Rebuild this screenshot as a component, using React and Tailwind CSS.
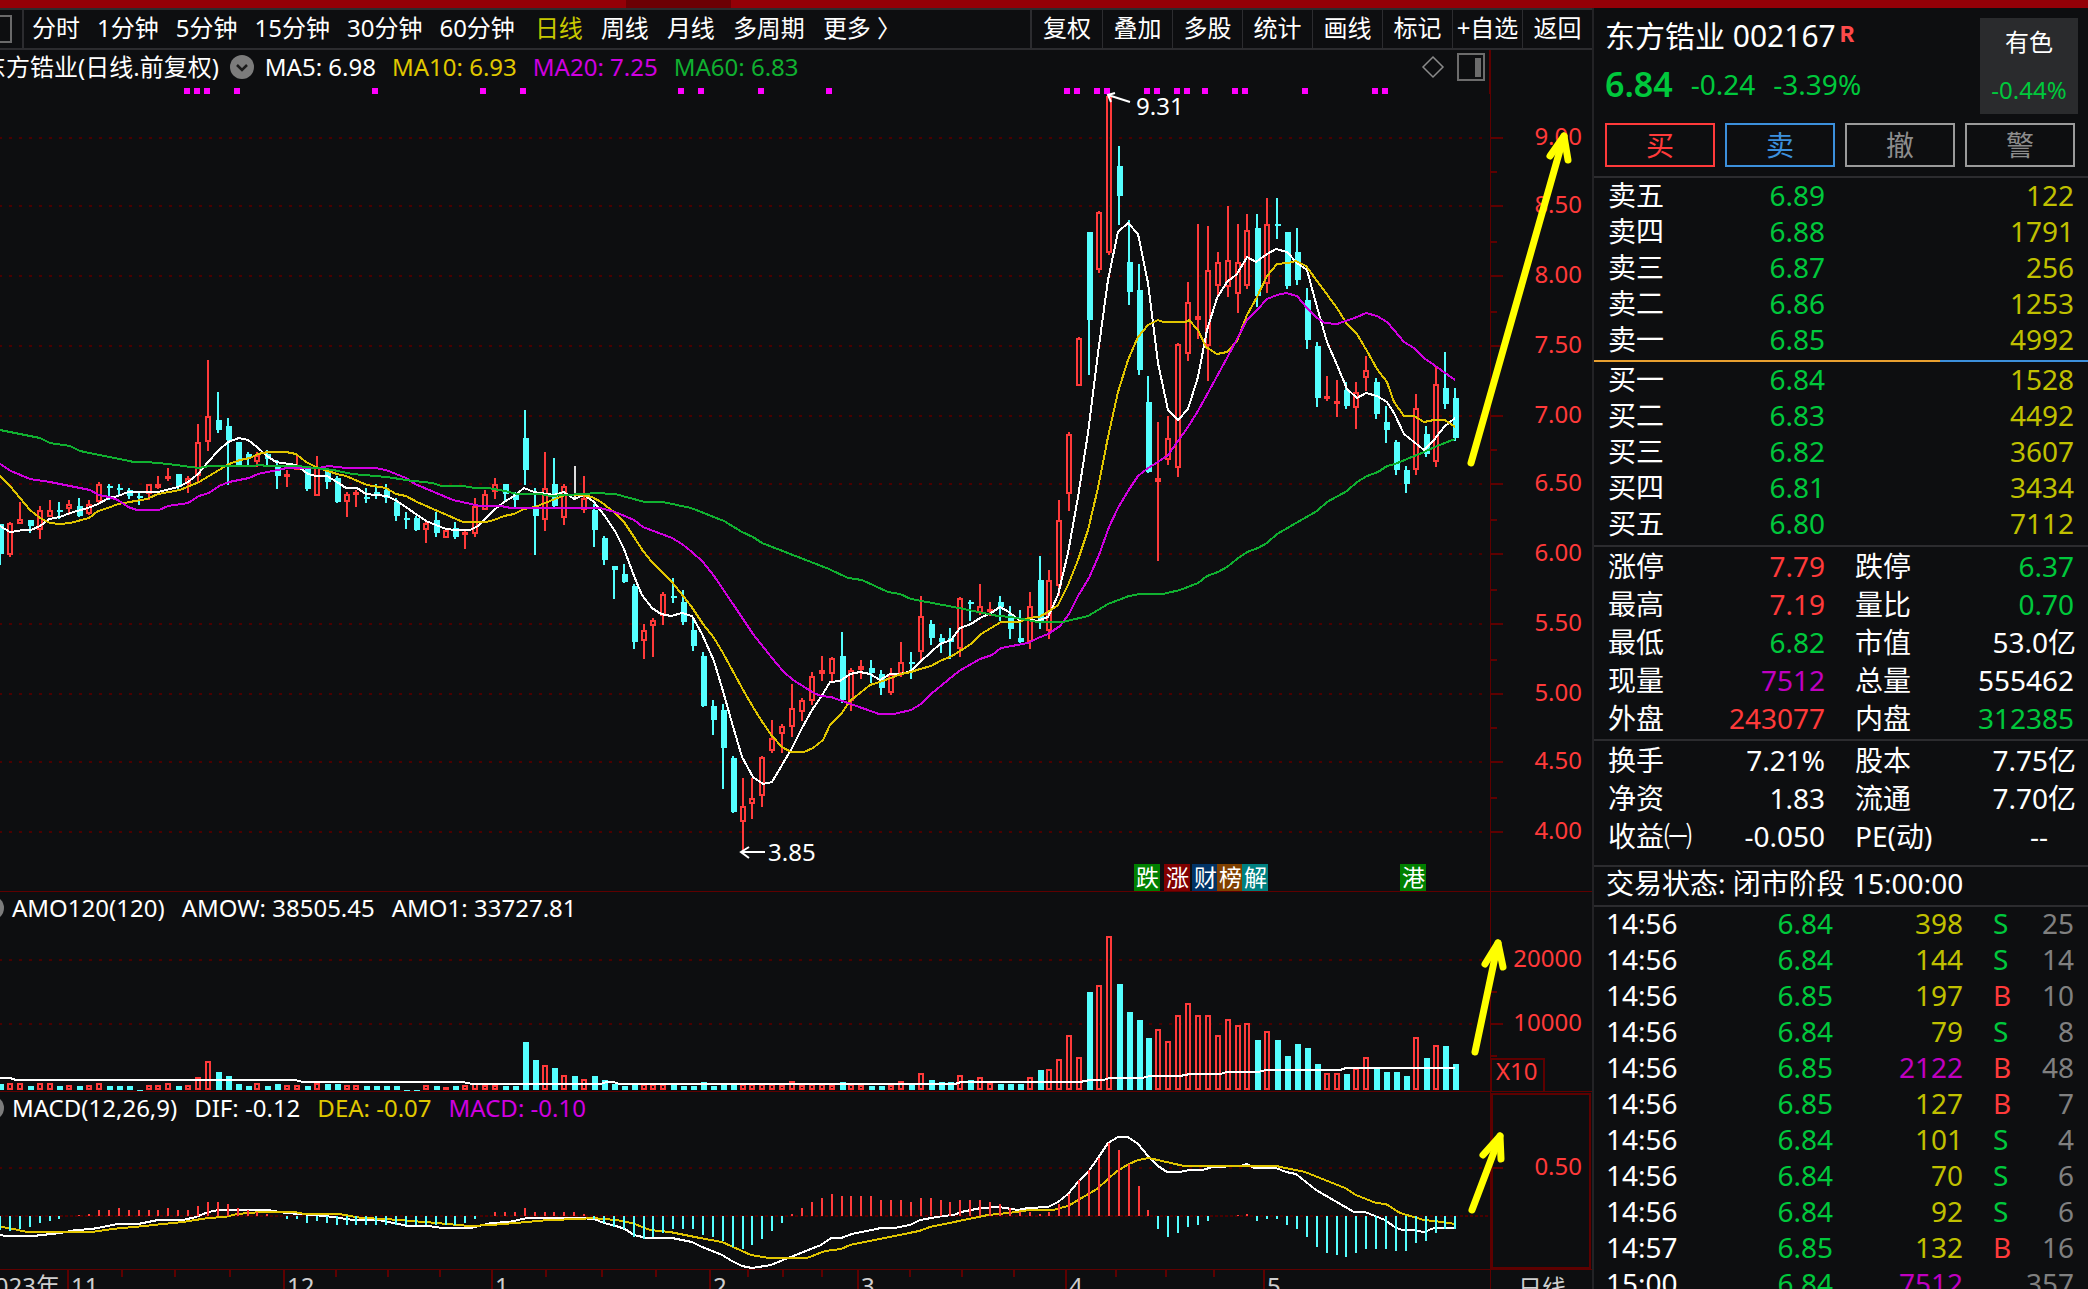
import React from "react";

const STEP = 9.9;
const RED = "#ff3a3a";
const CYAN = "#54ffff";
const FRAME = "#5e0000";
const GRID = "#4a0000";

// kind (r = up, c = down, w = flat), high, body top, body bottom, low
const CANDLES = `
c524,524,554,565 r522,523,555,557 r502,519,524,524 c520,520,526,533 r506,510,530,539 r500,510,517,517
c502,510,511,519 r500,504,509,515 c498,506,516,517 r500,504,514,515 r482,484,502,504 c484,486,487,500
c484,488,489,496 c488,490,496,499 c492,496,497,505 r484,484,494,500 r476,484,488,489 r468,476,478,481
c474,474,487,489 r476,478,484,493 r424,442,476,482 r360,416,442,451 c392,420,430,433 c418,426,440,485
c442,442,465,465 c452,454,458,465 r452,455,462,467 c450,454,459,466 c460,465,476,489 r470,474,477,487
r456,466,470,470 c466,466,489,491 r456,467,496,496 c468,469,482,489 c476,478,502,503 r492,494,502,517
r490,492,495,507 c488,497,498,503 c484,492,493,499 c484,490,498,503 c498,502,516,521 c512,518,519,529
c516,518,530,531 r520,523,530,543 c512,520,533,537 r530,530,538,538 c522,528,537,539 r530,532,534,549
r498,506,534,537 r490,494,510,510 r478,484,492,499 c484,484,494,501 c492,494,500,507 c410,438,470,485
c488,506,516,555 r452,488,520,531 c458,484,506,507 r484,486,518,525 w466,466,500,500 r476,498,510,513
c504,510,530,547 c536,538,560,565 c566,566,570,599 c564,574,582,583 c584,586,642,649 r624,630,641,659
r618,620,626,657 r592,594,616,625 c578,596,598,603 c590,602,622,625 c618,630,646,651 c652,656,706,707
c700,706,720,735 c704,710,748,789 c756,758,812,813 r778,806,822,851 r778,798,804,819 r756,757,796,807
r720,738,751,753 r724,726,734,753 r684,708,727,737 r698,700,712,721 r672,676,701,705 r656,670,674,681
r657,658,674,681 c632,656,700,703 r668,670,701,711 r660,666,670,679 c660,668,673,683 c670,674,688,695
r668,674,693,695 r642,662,674,677 c652,662,663,679 r596,616,652,662 c620,624,638,645 c634,638,642,653
c628,638,642,659 r597,598,649,657 c600,602,604,621 r584,606,613,615 r602,609,612,616 c596,602,607,621
c606,614,629,639 c610,638,642,643 r592,606,642,649 c556,580,623,629 r570,580,631,639 r500,520,586,596
r432,434,494,511 r337,338,386,386 c232,232,320,375 r211,212,270,273 r96,96,253,255 c146,166,196,225
c220,262,292,305 c264,290,370,375 c376,402,472,473 r422,478,482,561 r416,438,460,465 r343,344,468,477
r282,302,354,361 r224,316,320,339 r226,270,346,381 r252,262,286,297 r206,260,287,297 r224,262,294,313
r214,230,286,289 c214,228,296,307 r198,224,284,293 c198,224,225,239 c232,232,286,289 c228,252,280,285
c288,300,340,349 c342,346,398,407 r376,396,399,401 r380,401,403,417 c382,390,406,409 r382,392,408,429
r356,370,378,391 c378,382,414,419 c406,422,430,443 c440,442,470,475 c466,470,484,493 r394,408,470,475
c426,434,454,457 r366,384,462,467 c352,388,404,409 c388,398,438,441`
  .trim()
  .split(/\s+/)
  .map((s, i) => {
    const [hi, top, bot, lo] = s.slice(1).split(",").map(Number);
    return { kind: s[0], x: Math.round(i * STEP), hi, top, bot, lo };
  });

// top edge of each turnover bar
const AMOUNTS = [
  1084, 1083, 1083, 1086, 1083, 1083, 1086, 1085, 1086, 1085, 1083, 1086, 1086, 1086, 1090, 1085, 1085, 1083, 1086, 1085,
  1077, 1061, 1072, 1076, 1084, 1086, 1083, 1086, 1084, 1085, 1085, 1086, 1083, 1084, 1084, 1085, 1085, 1086, 1086, 1086,
  1086, 1090, 1090, 1085, 1086, 1087, 1086, 1085, 1083, 1085, 1085, 1086, 1086, 1042, 1060, 1065, 1068, 1075, 1076, 1079,
  1076, 1080, 1084, 1086, 1084, 1084, 1084, 1084, 1084, 1086, 1086, 1082, 1086, 1084, 1084, 1084, 1084, 1084, 1084, 1085,
  1081, 1085, 1084, 1084, 1085, 1082, 1084, 1085, 1086, 1086, 1085, 1081, 1085, 1073, 1080, 1082, 1082, 1075, 1080, 1077,
  1083, 1084, 1084, 1084, 1077, 1070, 1069, 1059, 1035, 1057, 992, 985, 936, 984, 1012, 1020, 1038, 1029, 1041, 1015,
  1003, 1015, 1015, 1035, 1019, 1025, 1023, 1040, 1031, 1040, 1056, 1044, 1048, 1064, 1073, 1073, 1074, 1068, 1057, 1069,
  1072, 1072, 1076, 1037, 1058, 1045, 1046, 1064,
];

// tip of each MACD stick; 1216 is the zero line
const STICKS = [
  1230, 1231, 1229, 1227, 1223, 1221, 1219, 1216, 1215, 1214, 1210, 1210, 1208, 1210, 1210, 1210, 1210, 1208, 1210, 1210,
  1206, 1202, 1202, 1204, 1208, 1210, 1212, 1214, 1216, 1219, 1219, 1223, 1221, 1223, 1225, 1225, 1225, 1225, 1225, 1225,
  1225, 1225, 1225, 1225, 1225, 1225, 1225, 1223, 1219, 1216, 1212, 1212, 1212, 1208, 1212, 1212, 1212, 1212, 1212, 1214,
  1219, 1223, 1227, 1229, 1237, 1239, 1237, 1233, 1229, 1229, 1229, 1235, 1237, 1241, 1247, 1249, 1245, 1239, 1231, 1223,
  1214, 1208, 1202, 1198, 1194, 1196, 1196, 1196, 1196, 1200, 1200, 1200, 1202, 1198, 1198, 1200, 1202, 1200, 1200, 1200,
  1202, 1204, 1208, 1212, 1212, 1214, 1212, 1204, 1194, 1180, 1170, 1158, 1143, 1150, 1164, 1186, 1210, 1229, 1237, 1233,
  1227, 1225, 1221, 1216, 1216, 1215, 1214, 1221, 1219, 1219, 1225, 1229, 1237, 1247, 1253, 1255, 1257, 1253, 1249, 1249,
  1249, 1251, 1251, 1243, 1241, 1233, 1229, 1229,
];

const MA5 =
  "0,526 10,532 18,531 22,530 31,530 40,526 49,519 60,517 70,513 88,508 98,504 109,498 118,496 128,492 158,492 178,487 188,482 198,474 208,462 218,451 228,442 239,438 248,440 257,447 267,456 276,462 296,465 308,474 316,476 327,476 337,482 346,488 357,488 366,494 387,496 397,501 426,521 446,529 456,530 470,530 478,526 494,510 504,502 514,496 524,488 534,492 554,495 564,492 574,499 584,495 594,502 604,515 615,531 624,549 634,576 642,595 652,608 661,614 671,616 682,613 692,616 702,634 714,661 723,691 732,723 742,757 753,777 763,784 772,782 792,748 802,728 812,710 821,697 830,682 840,681 850,674 860,672 870,674 880,680 890,674 901,674 911,671 920,662 931,652 940,644 951,640 960,628 971,624 980,618 991,613 1000,607 1009,612 1020,621 1027,619 1037,621 1048,617 1058,595 1068,553 1078,497 1088,433 1098,353 1108,280 1118,232 1128,223 1138,234 1148,283 1158,363 1168,410 1178,420 1188,409 1198,377 1207,330 1217,298 1227,282 1237,274 1247,257 1256,262 1267,254 1276,249 1287,252 1297,263 1307,270 1317,307 1327,342 1337,365 1347,389 1357,398 1366,393 1377,396 1387,402 1394,413 1404,434 1424,450 1434,440 1444,427 1455,418";
const MA10 =
  "0,476 10,486 30,510 40,518 50,523 60,524 70,523 89,518 98,511 108,508 118,504 147,499 158,494 180,490 199,482 229,464 240,460 250,458 258,454 268,452 286,452 296,454 306,462 316,467 337,474 346,476 367,485 386,488 396,494 406,496 417,502 463,522 486,522 494,520 504,516 514,514 524,509 535,507 555,499 565,495 582,495 592,497 601,502 614,512 624,522 634,537 643,551 652,562 663,573 672,582 691,606 703,624 714,638 723,653 742,688 753,707 763,723 772,736 782,747 791,752 804,752 813,748 823,740 830,725 841,714 850,701 860,693 870,685 880,682 901,674 911,672 920,669 931,666 940,661 952,656 971,644 981,634 1001,622 1020,622 1028,618 1039,617 1048,612 1058,605 1068,585 1078,560 1088,530 1098,488 1108,437 1118,392 1128,360 1138,337 1148,325 1158,320 1163,322 1186,322 1189,320 1198,330 1206,347 1217,354 1227,352 1237,341 1247,315 1257,297 1267,276 1277,264 1288,263 1296,261 1306,266 1337,308 1347,324 1357,334 1367,351 1377,369 1387,382 1394,402 1404,416 1414,416 1424,422 1434,420 1445,420 1455,427";
const MA20 =
  "0,464 11,471 30,479 50,482 90,490 99,495 109,497 118,500 128,507 137,510 159,510 168,506 188,503 199,496 209,493 219,486 229,482 249,478 258,474 287,468 318,468 329,466 346,468 375,468 386,470 406,478 415,484 453,500 480,506 501,506 511,508 600,508 615,512 634,520 643,527 672,538 682,544 692,552 703,562 714,576 733,604 753,634 772,658 783,671 793,680 814,693 821,696 831,697 848,703 879,714 894,714 911,710 921,704 931,694 959,671 980,659 992,655 1001,648 1028,643 1038,638 1048,634 1060,626 1069,614 1078,596 1089,578 1099,555 1109,527 1118,508 1128,491 1138,476 1148,468 1158,462 1168,455 1178,441 1188,427 1198,411 1227,358 1237,339 1247,320 1257,310 1267,299 1277,295 1286,293 1297,296 1307,308 1317,318 1325,323 1337,324 1357,317 1366,313 1377,316 1387,322 1394,330 1404,342 1414,348 1424,358 1434,365 1455,380";
const MA60 =
  "0,430 40,438 50,443 70,446 80,451 134,462 147,462 168,464 199,468 209,466 253,466 259,465 268,466 297,466 333,470 352,474 387,477 406,480 432,483 442,486 463,486 475,488 488,488 505,491 517,494 540,494 551,496 563,495 586,494 595,493 615,494 645,502 663,502 691,508 724,521 742,532 753,537 762,543 829,569 848,578 862,580 888,592 900,594 911,599 959,608 998,616 1011,617 1038,622 1063,622 1088,616 1108,604 1129,596 1140,594 1163,594 1180,590 1198,583 1207,576 1218,572 1227,567 1237,559 1247,552 1258,548 1267,543 1277,534 1317,511 1327,502 1347,491 1357,482 1367,476 1378,472 1387,466 1395,464 1424,452 1437,446 1455,439";
const AMOW =
  "0,1078 10,1078 16,1080 295,1080 303,1082 463,1082 472,1084 600,1084 607,1082 613,1082 620,1084 955,1084 961,1082 1080,1082 1090,1080 1103,1080 1110,1078 1142,1078 1150,1076 1180,1076 1190,1074 1220,1074 1227,1072 1258,1072 1266,1070 1340,1070 1346,1068 1455,1068";
const DIF =
  "0,1235 6,1236 33,1236 60,1233 76,1230 92,1229 118,1224 138,1224 158,1220 183,1220 196,1217 208,1212 219,1210 268,1210 286,1213 326,1216 353,1220 379,1220 408,1226 429,1226 442,1228 471,1228 491,1223 509,1222 527,1218 580,1218 594,1219 604,1223 616,1226 625,1229 634,1235 647,1238 672,1238 692,1242 700,1246 722,1255 732,1261 742,1266 752,1268 771,1265 783,1260 821,1245 831,1238 841,1238 852,1234 881,1228 894,1228 910,1225 920,1220 943,1216 954,1215 961,1212 981,1208 999,1207 1018,1210 1028,1208 1048,1207 1058,1202 1068,1194 1078,1182 1088,1172 1098,1158 1108,1143 1118,1137 1128,1137 1138,1144 1148,1156 1158,1166 1167,1172 1180,1172 1189,1170 1202,1170 1213,1167 1240,1166 1247,1164 1254,1168 1276,1168 1286,1172 1296,1174 1316,1190 1354,1212 1365,1212 1385,1220 1396,1228 1403,1230 1412,1230 1424,1232 1434,1228 1455,1228";
const DEA =
  "0,1227 9,1228 27,1232 92,1232 112,1229 134,1227 183,1222 208,1218 225,1217 237,1214 261,1212 295,1212 304,1214 339,1214 362,1218 386,1219 437,1223 469,1226 491,1225 527,1222 549,1220 580,1219 592,1218 616,1220 632,1223 650,1230 670,1232 700,1238 722,1242 751,1255 769,1258 807,1258 825,1251 841,1249 850,1245 919,1231 930,1227 988,1215 1008,1213 1030,1210 1053,1210 1068,1206 1097,1189 1108,1179 1117,1171 1129,1164 1138,1160 1149,1158 1184,1166 1276,1166 1305,1172 1345,1188 1356,1195 1376,1203 1386,1204 1400,1213 1424,1220 1443,1222 1455,1224";

const PRICE_LEVELS = [
  ["9.00", 138], ["8.50", 206], ["8.00", 276], ["7.50", 346], ["7.00", 416], ["6.50", 484],
  ["6.00", 554], ["5.50", 624], ["5.00", 694], ["4.50", 762], ["4.00", 832],
];
const MINOR_TICKS = [172, 242, 312, 380, 450, 520, 590, 660, 728, 798];
const EVENT_MARKS = [
  184, 194, 204, 234, 372, 480, 520, 678, 698, 758, 826, 1064, 1074, 1094, 1104, 1144, 1154, 1174, 1184, 1202, 1232,
  1242, 1302, 1372, 1382,
];
const TAGS = [
  ["跌", 1134, "#008000"], ["涨", 1164, "#800000"], ["财", 1192, "#003366"],
  ["榜", 1217, "#804000"], ["解", 1242, "#008080"], ["港", 1400, "#008000"],
];
const MONTHS = [[68, "11"], [284, "12"], [492, "1"], [710, "2"], [858, "3"], [1066, "4"], [1264, "5"]];
const WEEKS = [122, 175, 230, 336, 388, 440, 546, 602, 656, 748, 783, 822, 910, 962, 1014, 1116, 1166, 1214];

const MINUTE_PERIODS = ["分时", "1分钟", "5分钟", "15分钟", "30分钟", "60分钟"];
const DAY_PERIODS = ["日线", "周线", "月线", "多周期", "更多 〉"];
const TOOLS = ["复权", "叠加", "多股", "统计", "画线", "标记", "+自选", "返回"];

const ASKS = [["卖五", "6.89", "122"], ["卖四", "6.88", "1791"], ["卖三", "6.87", "256"], ["卖二", "6.86", "1253"], ["卖一", "6.85", "4992"]];
const BIDS = [["买一", "6.84", "1528"], ["买二", "6.83", "4492"], ["买三", "6.82", "3607"], ["买四", "6.81", "3434"], ["买五", "6.80", "7112"]];

const TONE = {
  white: "text-white",
  red: "text-[#ff3a3a]",
  green: "text-[#00c83c]",
  violet: "text-[#c000c0]",
};
const STATS = [
  ["涨停", "7.79", "red", "跌停", "6.37", "green"],
  ["最高", "7.19", "red", "量比", "0.70", "green"],
  ["最低", "6.82", "green", "市值", "53.0亿", "white"],
  ["现量", "7512", "violet", "总量", "555462", "white"],
  ["外盘", "243077", "red", "内盘", "312385", "green"],
];
const FUNDAMENTALS = [
  ["换手", "7.21%", "white", "股本", "7.75亿", "white"],
  ["净资", "1.83", "white", "流通", "7.70亿", "white"],
  ["收益㈠", "-0.050", "white", "PE(动)", "--", "white"],
];
const TICKS = [
  ["14:56", "6.84", "398", "S", "25"], ["14:56", "6.84", "144", "S", "14"], ["14:56", "6.85", "197", "B", "10"],
  ["14:56", "6.84", "79", "S", "8"], ["14:56", "6.85", "2122", "B", "48"], ["14:56", "6.85", "127", "B", "7"],
  ["14:56", "6.84", "101", "S", "4"], ["14:56", "6.84", "70", "S", "6"], ["14:56", "6.84", "92", "S", "6"],
  ["14:57", "6.85", "132", "B", "16"], ["15:00", "6.84", "7512", "", "357"],
];

function GridLine({ y }) {
  return <line x1="-1" x2="1489" y1={y} y2={y} stroke={GRID} strokeWidth="2" strokeDasharray="3 7" />;
}

function Line({ points, color }) {
  return <polyline points={points} fill="none" stroke={color} strokeWidth="2" />;
}

function AxisText({ x = 1582, y, anchor = "end", children }) {
  return <text x={x} y={y} textAnchor={anchor} fill={RED} fontSize="24">{children}</text>;
}

function YellowArrow({ shaft, head }) {
  return (
    <g fill="none" stroke="#ffff00" strokeWidth="7" strokeLinecap="round" strokeLinejoin="round">
      <path d={shaft} />
      <path d={head} />
    </g>
  );
}

function Candle({ c }) {
  if (c.kind === "w") return <rect x={c.x} y={c.hi} width="2" height={c.lo - c.hi} fill="#dddddd" />;
  if (c.kind === "c") {
    return (
      <g fill={CYAN}>
        <rect x={c.x - 1} y={c.hi} width="2" height={c.lo - c.hi} />
        <rect x={c.x - 2} y={c.top} width="6" height={Math.max(c.bot - c.top, 2)} />
      </g>
    );
  }
  return (
    <g fill={RED}>
      <rect x={c.x - 1} y={c.hi} width="2" height={c.top - c.hi} />
      <rect x={c.x - 1} y={c.bot} width="2" height={c.lo - c.bot} />
      <rect x={c.x - 2} y={c.top + 1} width="4" height={Math.max(c.bot - c.top - 2, 1)} fill="none" stroke={RED} strokeWidth="2" />
    </g>
  );
}

function PriceChart() {
  return (
    <svg viewBox="0 50 1592 842" className="[grid-area:1/1] h-full w-full" role="img" aria-label="日线图">
      <g shapeRendering="crispEdges">
        {PRICE_LEVELS.map(([t, y]) => <GridLine key={t} y={y} />)}
        <rect x="1490" y="50" width="1" height="842" fill={FRAME} />
        <rect x="1489" y="50" width="2" height="44" fill={FRAME} />
        {PRICE_LEVELS.map(([t, y]) => <rect key={t} x="1491" y={y - 1} width="12" height="2" fill={FRAME} />)}
        {MINOR_TICKS.map((y) => <rect key={y} x="1491" y={y - 1} width="6" height="2" fill={FRAME} />)}
        <rect x="0" y="891" width="1592" height="2" fill={FRAME} />
        {EVENT_MARKS.map((x) => <rect key={x} x={x} y="88" width="6" height="6" fill="#ff00ff" />)}
        {CANDLES.map((c) => <Candle key={c.x} c={c} />)}
        <Line points={MA5} color="#ffffff" />
        <Line points={MA10} color="#e0c400" />
        <Line points={MA20} color="#d000e0" />
        <Line points={MA60} color="#10b030" />
      </g>
      <g fill="none" stroke="#ffffff" strokeWidth="2">
        <path d="M1130 102 1108 95M1115 93 1108 95 1111 102" />
        <path d="M765 852H741M749 847 741 852 749 858" />
      </g>
      <g fill="#ffffff" fontSize="24">
        <text x="1136" y="115">9.31</text>
        <text x="768" y="861">3.85</text>
      </g>
      {TAGS.map(([t, x, color]) => (
        <g key={t}>
          <rect x={x} y="864" width="26" height="27" fill={color} />
          <text x={x + 2} y="886" fontSize="23" fill="#ffffff">{t}</text>
        </g>
      ))}
      {PRICE_LEVELS.map(([t, y]) => <AxisText key={t} y={y + 7}>{t}</AxisText>)}
      <YellowArrow shaft="M1471 463 1564 136" head="M1550 156 1564 136 1568 160" />
    </svg>
  );
}

function AmountChart() {
  return (
    <svg viewBox="0 892 1592 200" className="[grid-area:1/1] h-full w-full" role="img" aria-label="成交额">
      <g shapeRendering="crispEdges">
        <GridLine y={960} />
        <GridLine y={1024} />
        <rect x="1490" y="892" width="1" height="200" fill={FRAME} />
        {[960, 1024].map((y) => <rect key={y} x="1491" y={y - 1} width="12" height="2" fill={FRAME} />)}
        {[992, 1056].map((y) => <rect key={y} x="1491" y={y - 1} width="6" height="2" fill={FRAME} />)}
        {CANDLES.map((c, i) =>
          c.kind === "r" ? (
            <rect key={c.x} x={c.x - 2} y={AMOUNTS[i] + 1} width="4" height={Math.max(1088 - AMOUNTS[i], 1)} fill="none" stroke={RED} strokeWidth="2" />
          ) : (
            <rect key={c.x} x={c.x - 2} y={AMOUNTS[i]} width="6" height={Math.max(1090 - AMOUNTS[i], 2)} fill={CYAN} />
          )
        )}
        <Line points={AMOW} color="#ffffff" />
        <rect x="1491" y="1059" width="53" height="33" fill="none" stroke={FRAME} strokeWidth="2" />
        <rect x="0" y="1091" width="1592" height="1" fill={FRAME} />
      </g>
      <AxisText y={967}>20000</AxisText>
      <AxisText y={1031}>10000</AxisText>
      <AxisText x={1496} y={1080} anchor="start">X10</AxisText>
      <YellowArrow shaft="M1475 1052 1498 943" head="M1485 964 1498 943 1503 967" />
    </svg>
  );
}

function MacdChart() {
  return (
    <svg viewBox="0 1092 1592 178" className="[grid-area:1/1] h-full w-full" role="img" aria-label="MACD">
      <g shapeRendering="crispEdges">
        <GridLine y={1168} />
        <line x1="0" x2="1488" y1="1216" y2="1216" stroke={GRID} strokeWidth="2" strokeDasharray="3 2" />
        <rect x="1492" y="1094" width="98" height="174" fill="none" stroke={FRAME} strokeWidth="2" />
        <rect x="1490" y="1092" width="1" height="178" fill={FRAME} />
        <rect x="1491" y="1167" width="12" height="2" fill={FRAME} />
        <Line points={DIF} color="#ffffff" />
        <Line points={DEA} color="#e0c400" />
        {STICKS.map((y, i) => (
          <rect
            key={i}
            x={Math.round(i * STEP) - 1}
            y={Math.min(y, 1216)}
            width="2"
            height={Math.abs(1216 - y)}
            fill={y < 1216 ? RED : CYAN}
          />
        ))}
        <rect x="0" y="1269" width="1592" height="1" fill={FRAME} />
      </g>
      <AxisText y={1175}>0.50</AxisText>
      <YellowArrow shaft="M1472 1210 1500 1136" head="M1483 1155 1500 1136 1501 1159" />
    </svg>
  );
}

function TimeAxis() {
  return (
    <svg viewBox="0 1270 1592 19" className="h-full w-full" role="img" aria-label="时间轴">
      <rect x="1490" y="1270" width="1" height="19" fill={FRAME} />
      {WEEKS.map((x) => <rect key={x} x={x - 1} y="1270" width="2" height="7" fill={FRAME} />)}
      {MONTHS.map(([x]) => <rect key={x} x={x - 1} y="1270" width="2" height="19" fill={FRAME} />)}
      <g fill="#cfcfcf" fontSize="24">
        <text x="60" y="1295" textAnchor="end">2023年</text>
        {MONTHS.map(([x, t]) => <text key={x} x={x + 3} y="1295">{t}</text>)}
        <text x="1518" y="1297">日线</text>
      </g>
    </svg>
  );
}

function Toggle({ label }) {
  return (
    <button type="button" aria-label={label} className="flex size-6 shrink-0 items-center justify-center rounded-full bg-[#7c7c7c]">
      <svg viewBox="0 0 24 24" className="size-6" fill="none" stroke="#1c1c1c" strokeWidth="2.5">
        <path d="M7 10l5 5 5-5" />
      </svg>
    </button>
  );
}

function Book({ rows, label }) {
  return (
    <table aria-label={label} className="w-full table-fixed">
      <colgroup>
        <col className="w-[100px]" />
        <col className="w-[131px]" />
        <col />
      </colgroup>
      <tbody>
        {rows.map(([name, price, volume]) => (
          <tr key={name} className="h-9">
            <th scope="row" className="p-0 pb-0.5 pl-3.5 text-left font-normal">{name}</th>
            <td className="p-0 pb-0.5 text-right text-[#00c83c]">{price}</td>
            <td className="p-0 pr-3.5 pb-0.5 text-right text-[#c0c000]">{volume}</td>
          </tr>
        ))}
      </tbody>
    </table>
  );
}

function Stats({ rows, label }) {
  return (
    <table aria-label={label} className="w-full table-fixed">
      <colgroup>
        <col className="w-[110px]" />
        <col className="w-[121px]" />
        <col className="w-[120px]" />
        <col />
      </colgroup>
      <tbody>
        {rows.map(([a, av, at, b, bv, bt]) => (
          <tr key={a} className="h-[38px]">
            <th scope="row" className="p-0 pl-3.5 text-left font-normal whitespace-nowrap">{a}</th>
            <td className={"p-0 text-right " + TONE[at]}>{av}</td>
            <th scope="row" className="p-0 pl-[30px] text-left font-normal whitespace-nowrap">{b}</th>
            <td className={"p-0 text-right " + (bv === "--" ? "pr-10 " : bv.endsWith("亿") ? "pr-3 " : "pr-3.5 ") + TONE[bt]}>{bv}</td>
          </tr>
        ))}
      </tbody>
    </table>
  );
}

function QuotePanel() {
  return (
    <aside className="flex w-[496px] shrink-0 flex-col overflow-hidden border-l-2 border-[#232326] text-[28px] leading-8">
      <header className="border-b-2 border-[#2c2c2f] pt-2.5 pr-2.5 pb-[9px] pl-[11px]">
        <div className="flex h-24 items-stretch justify-between">
          <div className="flex flex-col">
            <h1 className="flex h-9 items-center text-[30px]">
              <span>东方锆业 002167</span>
              <sup className="top-0 ml-1 font-mono text-2xl leading-6 font-bold text-[#ff4a4a]">R</sup>
            </h1>
            <div className="mt-2.5 flex h-10 items-center gap-[18px] text-[#00c83c]">
              <strong className="text-[34px] font-semibold">6.84</strong>
              <span>-0.24</span>
              <span>-3.39%</span>
            </div>
          </div>
          <button type="button" className="flex w-[98px] flex-col items-center justify-between bg-[#2a2b2d] pt-2 pb-2 text-2xl leading-8">
            <span>有色</span>
            <span className="text-[#00c83c]">-0.44%</span>
          </button>
        </div>
        <div className="mt-[9px] flex gap-2.5 pr-[3px]">
          <button type="button" className="h-11 flex-1 border-2 border-[#ff3a3a] text-[#ff3a3a]">买</button>
          <button type="button" className="h-11 flex-1 border-2 border-[#3c90dc] text-[#3c90dc]">卖</button>
          <button type="button" className="h-11 flex-1 border-2 border-[#9a9a9a] text-[#8c8c8c]">撤</button>
          <button type="button" className="h-11 flex-1 border-2 border-[#9a9a9a] text-[#8c8c8c]">警</button>
        </div>
      </header>
      <Book rows={ASKS} label="卖盘" />
      <div className="mt-0.5 flex h-0.5 w-full shrink-0 bg-[#3c90dc]">
        <div className="w-[70%] bg-[#e8a030]" />
      </div>
      <Book rows={BIDS} label="买盘" />
      <div className="mt-[3px] border-t-2 border-[#2c2c2f]">
        <Stats rows={STATS} label="行情" />
      </div>
      <div className="mt-0.5 border-t-2 border-[#2c2c2f]">
        <Stats rows={FUNDAMENTALS} label="基本面" />
      </div>
      <p className="mt-2.5 border-y-2 border-[#2c2c2f] pb-1.5 pl-3 whitespace-nowrap">交易状态: 闭市阶段 15:00:00</p>
      <table aria-label="分笔成交" className="w-full table-fixed">
        <colgroup>
          <col className="w-[110px]" />
          <col className="w-[129px]" />
          <col className="w-[130px]" />
          <col className="w-[54px]" />
          <col />
        </colgroup>
        <tbody>
          {TICKS.map(([time, price, volume, side, count], i) => (
            <tr key={i} className="h-9">
              <td className="p-0 pb-1 pl-3">{time}</td>
              <td className="p-0 pb-1 text-right text-[#00c83c]">{price}</td>
              <td className={"p-0 pb-1 text-right " + (volume.length > 3 ? "text-[#c000c0]" : "text-[#c0c000]")}>{volume}</td>
              <td className={"p-0 pb-1 pl-[30px] " + (side === "S" ? "text-[#00c83c]" : "text-[#ff3a3a]")}>{side}</td>
              <td className="p-0 pr-3.5 pb-1 text-right text-[#808080]">{count}</td>
            </tr>
          ))}
        </tbody>
      </table>
    </aside>
  );
}

export default function App() {
  return (
    <div className="flex h-screen flex-col overflow-hidden bg-[#0d0e10] font-['Noto_Sans','Noto_Sans_CJK_SC',sans-serif] text-white">
      <div className="flex h-2 shrink-0 bg-[#940007]">
        <div className="ml-[30%] w-[5%] bg-[#6c0004]" />
      </div>
      <div className="flex min-h-0 flex-1">
        <main className="flex min-w-0 flex-1 flex-col">
          <nav className="flex h-[42px] shrink-0 items-stretch border-t-2 border-b-2 border-[#2c2c2f] text-2xl leading-8 whitespace-nowrap">
            <div className="flex w-6 shrink-0 items-center border-r-2 border-[#2c2c2f]">
              <button type="button" aria-label="菜单" className="h-7 w-3 border-2 border-l-0 border-[#6a6a6a]" />
            </div>
            <div className="flex items-center gap-[17px] pb-0.5 pl-2">
              {MINUTE_PERIODS.map((p) => <button type="button" key={p}>{p}</button>)}
            </div>
            <div className="ml-5 flex flex-1 items-center gap-[18px] pb-0.5">
              {DAY_PERIODS.map((p) => (
                <button type="button" key={p} className={p === "日线" ? "text-[#c8c800]" : ""}>{p}</button>
              ))}
            </div>
            <div className="flex shrink-0 border-l-2 border-[#2c2c2f]">
              {TOOLS.map((t) => (
                <button type="button" key={t} className="w-[70px] border-l border-[#2c2c2f] pb-0.5 first:border-l-0">{t}</button>
              ))}
            </div>
          </nav>
          <div className="grid min-h-0 flex-1 grid-cols-1 grid-rows-[842fr_200fr_178fr_19fr]">
            <section className="grid min-h-0">
              <div className="z-10 flex h-[34px] items-center self-start overflow-hidden text-2xl leading-8 whitespace-nowrap [grid-area:1/1]">
                <h2 className="-ml-[18px] text-2xl leading-8">东方锆业(日线.前复权)</h2>
                <div className="mx-[11px] flex"><Toggle label="指标" /></div>
                <div className="flex flex-1 gap-4">
                  <span>MA5: 6.98</span>
                  <span className="text-[#e0c800]">MA10: 6.93</span>
                  <span className="text-[#d000e0]">MA20: 7.25</span>
                  <span className="text-[#10b030]">MA60: 6.83</span>
                </div>
                <div className="mr-[107px] flex items-center gap-3">
                  <svg viewBox="0 0 24 24" className="size-6" fill="none" stroke="#8a8a8a" strokeWidth="1.5">
                    <path d="M12 2 22 12 12 22 2 12Z" />
                  </svg>
                  <svg viewBox="0 0 28 28" className="size-7" fill="none" stroke="#6c6c6c" strokeWidth="2">
                    <rect x="1" y="1" width="26" height="26" />
                    <rect x="18" y="5" width="6" height="19" fill="#6c6c6c" stroke="none" />
                  </svg>
                </div>
              </div>
              <PriceChart />
            </section>
            <section className="grid min-h-0">
              <div className="z-10 flex h-8 items-center gap-[17px] self-start overflow-hidden text-2xl leading-8 whitespace-nowrap [grid-area:1/1]">
                <div className="-mr-[9px] -ml-5 flex"><Toggle label="成交额" /></div>
                <span>AMO120(120)</span>
                <span>AMOW: 38505.45</span>
                <span>AMO1: 33727.81</span>
              </div>
              <AmountChart />
            </section>
            <section className="grid min-h-0">
              <div className="z-10 flex h-8 items-center gap-[17px] self-start overflow-hidden text-2xl leading-8 whitespace-nowrap [grid-area:1/1]">
                <div className="-mr-[9px] -ml-5 flex"><Toggle label="MACD" /></div>
                <span>MACD(12,26,9)</span>
                <span>DIF: -0.12</span>
                <span className="text-[#e0c800]">DEA: -0.07</span>
                <span className="text-[#d000e0]">MACD: -0.10</span>
              </div>
              <MacdChart />
            </section>
            <TimeAxis />
          </div>
        </main>
        <QuotePanel />
      </div>
    </div>
  );
}
